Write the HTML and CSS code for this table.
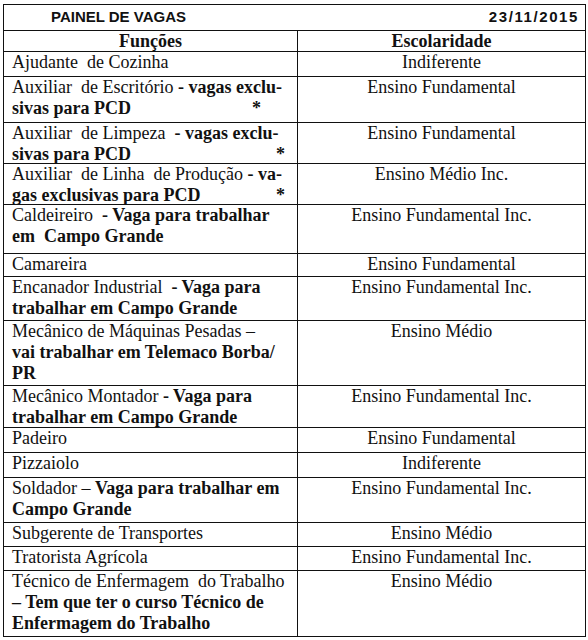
FILE: index.html
```html
<!DOCTYPE html>
<html>
<head>
<meta charset="utf-8">
<title>Painel de Vagas</title>
<link rel="stylesheet" href="styles.css">
</head>
<body>
<div class="vagas-grid">
  <div class="topo">
    <span class="topo-titulo">PAINEL DE VAGAS</span>
    <span class="topo-data">23/11/2015</span>
  </div>

  <div class="cel cab col-fn a21">Funções</div>
  <div class="cel cab col-esc a21">Escolaridade</div>

  <div class="cel col-fn a25">Ajudante&nbsp; de Cozinha</div>
  <div class="cel col-esc a25">Indiferente</div>

  <div class="cel col-fn a46">Auxiliar&nbsp; de Escritório <b class="neg">- vagas exclu-</b><div class="linha2"><b class="neg">sivas para PCD</b><b class="neg ast ast-larga">*</b></div></div>
  <div class="cel col-esc a46">Ensino Fundamental</div>

  <div class="cel col-fn a41">Auxiliar&nbsp; de Limpeza&nbsp; <b class="neg">- vagas exclu-</b><div class="linha2"><b class="neg">sivas para PCD</b><b class="neg ast">*</b></div></div>
  <div class="cel col-esc a41">Ensino Fundamental</div>

  <div class="cel col-fn a41">Auxiliar&nbsp; de Linha&nbsp; de Produção <b class="neg">- va-</b><div class="linha2"><b class="neg">gas exclusivas para PCD</b><b class="neg ast">*</b></div></div>
  <div class="cel col-esc a41">Ensino Médio Inc.</div>

  <div class="cel col-fn a49">Caldeireiro&nbsp; <b class="neg">- Vaga para trabalhar</b><br><b class="neg">em&nbsp; Campo Grande</b></div>
  <div class="cel col-esc a49">Ensino Fundamental Inc.</div>

  <div class="cel col-fn a23">Camareira</div>
  <div class="cel col-esc a23">Ensino Fundamental</div>

  <div class="cel col-fn a44">Encanador Industrial&nbsp; <b class="neg">- Vaga para</b><br><b class="neg">trabalhar em Campo Grande</b></div>
  <div class="cel col-esc a44">Ensino Fundamental Inc.</div>

  <div class="cel col-fn a65">Mecânico de Máquinas Pesadas –<br><b class="neg">vai trabalhar em Telemaco Borba/</b><br><b class="neg">PR</b></div>
  <div class="cel col-esc a65">Ensino Médio</div>

  <div class="cel col-fn a42">Mecânico Montador <b class="neg">- Vaga para</b><br><b class="neg">trabalhar em Campo Grande</b></div>
  <div class="cel col-esc a42">Ensino Fundamental Inc.</div>

  <div class="cel col-fn a25">Padeiro</div>
  <div class="cel col-esc a25">Ensino Fundamental</div>

  <div class="cel col-fn a25">Pizzaiolo</div>
  <div class="cel col-esc a25">Indiferente</div>

  <div class="cel col-fn a45">Soldador – <b class="neg">Vaga para trabalhar em</b><br><b class="neg">Campo Grande</b></div>
  <div class="cel col-esc a45">Ensino Fundamental Inc.</div>

  <div class="cel col-fn a24">Subgerente de Transportes</div>
  <div class="cel col-esc a24">Ensino Médio</div>

  <div class="cel col-fn a24">Tratorista Agrícola</div>
  <div class="cel col-esc a24">Ensino Fundamental Inc.</div>

  <div class="cel col-fn fim a65">Técnico de Enfermagem&nbsp; do Trabalho<br><b class="neg">– Tem que ter o curso Técnico de</b><br><b class="neg">Enfermagem do Trabalho</b></div>
  <div class="cel col-esc fim a65">Ensino Médio</div>
</div>
</body>
</html>
```

FILE: styles.css
```css
html, body {
  margin: 0;
  padding: 0;
  background: #fff;
}

.vagas-grid {
  margin: 4px 0 0 3px;
  width: 583px;
  box-sizing: border-box;
  border: 1px solid #111;
  display: grid;
  grid-template-columns: 294px 1fr;
  color: #111;
  font-family: "Liberation Serif";
  font-size: 18px;
  line-height: 21px;
}

.topo {
  grid-column: 1 / 3;
  height: 26px;
  box-sizing: border-box;
  border-bottom: 1px solid #111;
  display: flex;
  align-items: center;
  justify-content: space-between;
  padding: 0 6px 2px 47px;
  font-family: "Liberation Sans";
  font-weight: 700;
  font-size: 15px;
}

.topo-data {
  letter-spacing: 1.6px;
}

.cel {
  box-sizing: border-box;
  border-bottom: 1px solid #111;
  white-space: nowrap;
  overflow: hidden;
  font-family: "Liberation Serif";
}

.neg {
  font-family: "Liberation Serif";
  font-weight: 700;
}

.fim {
  border-bottom: none;
}

.col-fn {
  border-right: 1px solid #111;
  padding: 0 0 0 8px;
}

.col-esc {
  text-align: center;
  padding: 0;
}

.cab {
  font-weight: 700;
  text-align: center;
  padding-left: 0;
}

.linha2 {
  display: flex;
}

.ast {
  margin-left: auto;
  margin-right: 12px;
}

.ast-larga {
  margin-right: 36px;
}

.a21 { height: 21px; }
.a23 { height: 23px; }
.a24 { height: 24px; }
.a25 { height: 25px; }
.a41 { height: 41px; }
.a42 { height: 42px; }
.a44 { height: 44px; }
.a45 { height: 45px; }
.a46 { height: 46px; }
.a49 { height: 49px; }
.a65 { height: 65px; }
```
